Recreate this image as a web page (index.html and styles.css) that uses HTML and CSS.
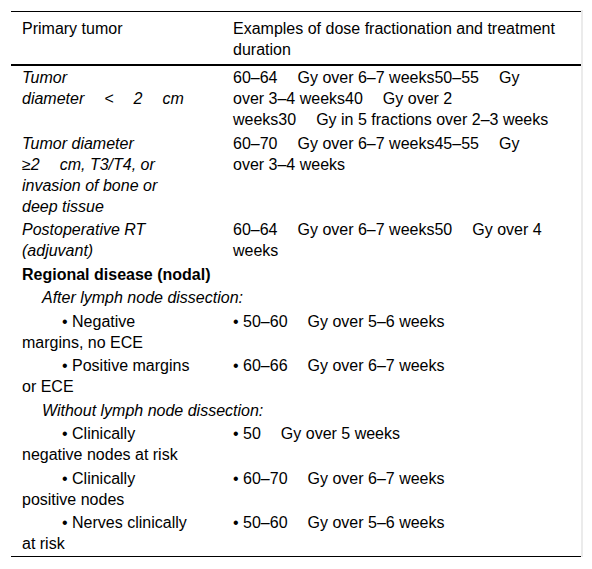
FILE: index.html
```html
<!DOCTYPE html>
<html>
<head>
  <title>Dose fractionation</title>
  <meta name="viewport" content="width=device-width, initial-scale=1.0">
  <link rel="stylesheet" href="styles.css">
</head>
<body>
  <div class="table-wrap">
    <table class="dose-table">
      <thead>
        <tr>
          <th class="col-tumor">Primary tumor</th>
          <th class="col-dose">Examples of dose fractionation and treatment<br>duration</th>
        </tr>
      </thead>
      <tbody>
        <tr>
          <td><i>Tumor<br>diameter<span class="sp"></span>&lt;<span class="sp"></span>2<span class="sp"></span>cm</i></td>
          <td>60–64<span class="sp"></span>Gy over 6–7 weeks50–55<span class="sp"></span>Gy<br>over 3–4 weeks40<span class="sp"></span>Gy over 2<br>weeks30<span class="sp"></span>Gy in 5 fractions over 2–3 weeks</td>
        </tr>
        <tr>
          <td><i>Tumor diameter<br>≥2<span class="sp"></span>cm, T3/T4, or<br>invasion of bone or<br>deep tissue</i></td>
          <td>60–70<span class="sp"></span>Gy over 6–7 weeks45–55<span class="sp"></span>Gy<br>over 3–4 weeks</td>
        </tr>
        <tr>
          <td><i>Postoperative RT<br>(adjuvant)</i></td>
          <td>60–64<span class="sp"></span>Gy over 6–7 weeks50<span class="sp"></span>Gy over 4<br>weeks</td>
        </tr>
        <tr>
          <td colspan="2" class="group"><b>Regional disease (nodal)</b></td>
        </tr>
        <tr>
          <td colspan="2" class="subgroup"><i>After lymph node dissection:</i></td>
        </tr>
        <tr>
          <td class="bullet">• Negative<br>margins, no ECE</td>
          <td>• 50–60<span class="sp"></span>Gy over 5–6 weeks</td>
        </tr>
        <tr>
          <td class="bullet">• Positive margins<br>or ECE</td>
          <td>• 60–66<span class="sp"></span>Gy over 6–7 weeks</td>
        </tr>
        <tr>
          <td colspan="2" class="subgroup"><i>Without lymph node dissection:</i></td>
        </tr>
        <tr>
          <td class="bullet">• Clinically<br>negative nodes at risk</td>
          <td>• 50<span class="sp"></span>Gy over 5 weeks</td>
        </tr>
        <tr>
          <td class="bullet">• Clinically<br>positive nodes</td>
          <td>• 60–70<span class="sp"></span>Gy over 6–7 weeks</td>
        </tr>
        <tr>
          <td class="bullet">• Nerves clinically<br>at risk</td>
          <td>• 50–60<span class="sp"></span>Gy over 5–6 weeks</td>
        </tr>
      </tbody>
    </table>
  </div>
</body>
</html>
```

FILE: styles.css
```css
body {
  margin: 0;
  font-family: "Liberation Sans", Arial, sans-serif;
  font-size: 16px;
  line-height: 21px;
  color: #000;
  background-color: #fff;
}

.table-wrap {
  margin: 10px 0 0 11px;
  width: 570px;
  padding-top: 1px;
  border-right: 2px solid #ebebeb;
}

.dose-table {
  width: 570px;
  border-collapse: collapse;
  table-layout: fixed;
}

.dose-table th,
.dose-table td {
  text-align: left;
  vertical-align: top;
  white-space: nowrap;
  padding: 1px 11px 1.5px 11px;
}

.dose-table th {
  font-weight: normal;
  padding-top: 6px;
  padding-bottom: 4px;
}

.dose-table thead tr {
  border-top: 1px solid #000;
  border-bottom: 2px solid #000;
}

.dose-table tbody tr:last-child {
  border-bottom: 1px solid #000;
}

.col-tumor {
  width: 189px;
}

/* wide fixed space between value and unit */
.sp {
  display: inline-block;
  width: 20px;
}

.subgroup {
  padding-left: 31px !important;
}

.bullet {
  text-indent: 40px;
}
```
